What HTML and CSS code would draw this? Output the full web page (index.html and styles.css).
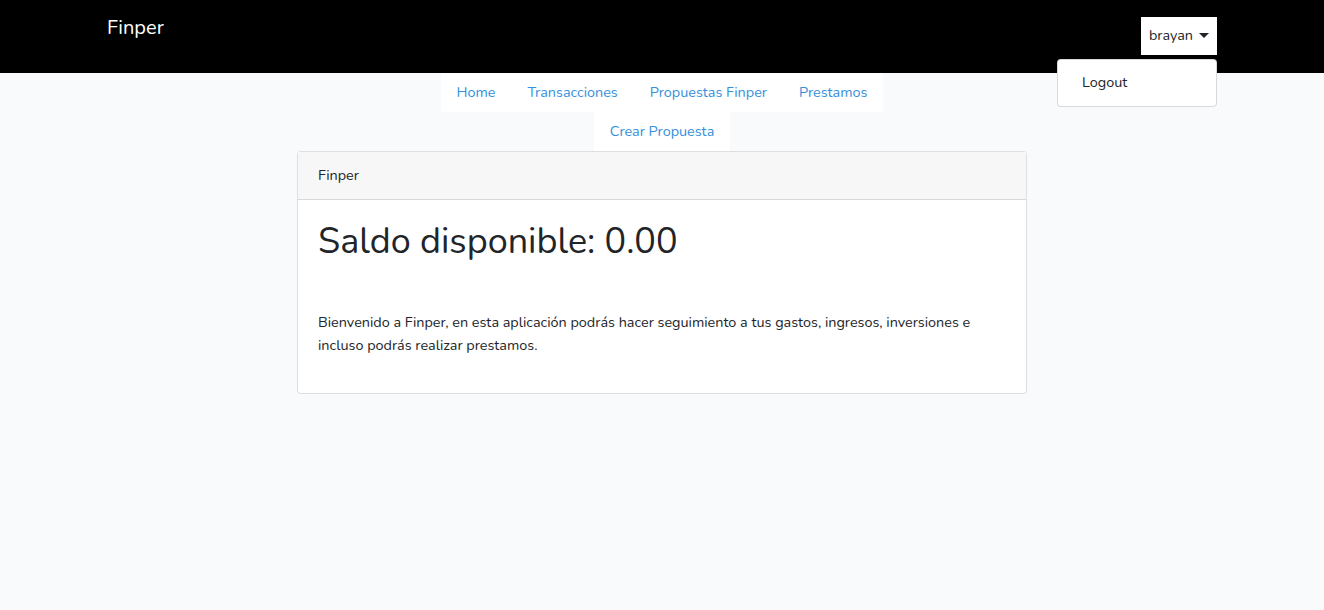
FILE: index.html
```html
<!DOCTYPE html>
<html lang="es">
<head>
<meta charset="utf-8">
<title>Finper</title>
<link rel="stylesheet" href="styles.css">
</head>
<body>
<header class="topbar">
  <div class="container topbar-inner">
    <a class="brand" href="#">Finper</a>
    <div class="user">
      <button class="user-btn">brayan <span class="caret"></span></button>
      <div class="menu">
        <a class="menu-item" href="#">Logout</a>
      </div>
    </div>
  </div>
</header>
<nav class="subnav">
  <ul class="subnav-list">
    <li><a href="#">Home</a></li>
    <li><a href="#">Transacciones</a></li>
    <li><a href="#">Propuestas Finper</a></li>
    <li><a href="#">Prestamos</a></li>
  </ul>
  <ul class="subnav-list">
    <li><a href="#">Crear Propuesta</a></li>
  </ul>
</nav>
<main class="main">
  <section class="card">
    <div class="card-header">Finper</div>
    <div class="card-body">
      <h1 class="balance">Saldo disponible: 0.00</h1>
      <p class="intro">Bienvenido a Finper, en esta aplicación podrás hacer seguimiento a tus gastos, ingresos, inversiones e incluso podrás realizar prestamos.</p>
    </div>
  </section>
</main>
</body>
</html>
```
FILE: styles.css
```css
* { box-sizing: border-box; }
html, body { margin: 0; padding: 0; }
body {
  background: #f8fafc;
  font-family: "Nunito", "Lato", "Noto Sans", sans-serif;
  font-size: 14.4px;
  line-height: 1.6;
  color: #212529;
}
a { text-decoration: none; }
.container {
  width: 1140px;
  margin: 0 auto;
  padding: 0 15px;
}
.topbar {
  background: #000;
  height: 73px;
}
.topbar-inner {
  display: flex;
  justify-content: space-between;
  align-items: flex-start;
}
.brand {
  color: #fff;
  font-size: 20px;
  line-height: 30px;
  padding-top: 13px;
}
.user {
  position: relative;
  margin-top: 17px;
}
.user-btn {
  background: #fff;
  border: 0;
  font-family: inherit;
  font-size: 14.4px;
  line-height: 23px;
  color: #212529;
  padding: 7px 8px 8px 8px;
  height: 38px;
  display: flex;
  align-items: center;
  gap: 6px;
}
.caret {
  display: inline-block;
  width: 0;
  height: 0;
  border-top: 5px solid #212529;
  border-left: 5px solid transparent;
  border-right: 5px solid transparent;
}
.menu {
  position: absolute;
  right: 0;
  top: 42px;
  width: 160px;
  background: #fff;
  border: 1px solid rgba(0,0,0,0.15);
  border-radius: 4px;
  padding: 7px 0 8px 0;
}
.menu-item {
  display: block;
  padding: 4px 24px;
  color: #212529;
  line-height: 23px;
}
.subnav {
  display: flex;
  flex-direction: column;
  align-items: center;
}
.subnav-list {
  list-style: none;
  margin: 0;
  padding: 0;
  display: flex;
  background: #fff;
}
.subnav-list a {
  display: block;
  padding: 8px 16px;
  color: #3490dc;
  line-height: 23px;
}
.main {
  display: flex;
  justify-content: center;
}
.card {
  width: 730px;
  background: #fff;
  border: 1px solid rgba(0,0,0,0.125);
  border-radius: 4px;
}
.card-header {
  background: #f7f7f7;
  border-bottom: 1px solid rgba(0,0,0,0.125);
  padding: 12px 20px;
  line-height: 23px;
}
.card-body {
  padding: 20px;
}
.balance {
  margin: 0 0 48px 0;
  font-size: 36px;
  font-weight: 400;
  line-height: 1.2;
}
.intro {
  margin: 0 0 16px 0;
}
```
